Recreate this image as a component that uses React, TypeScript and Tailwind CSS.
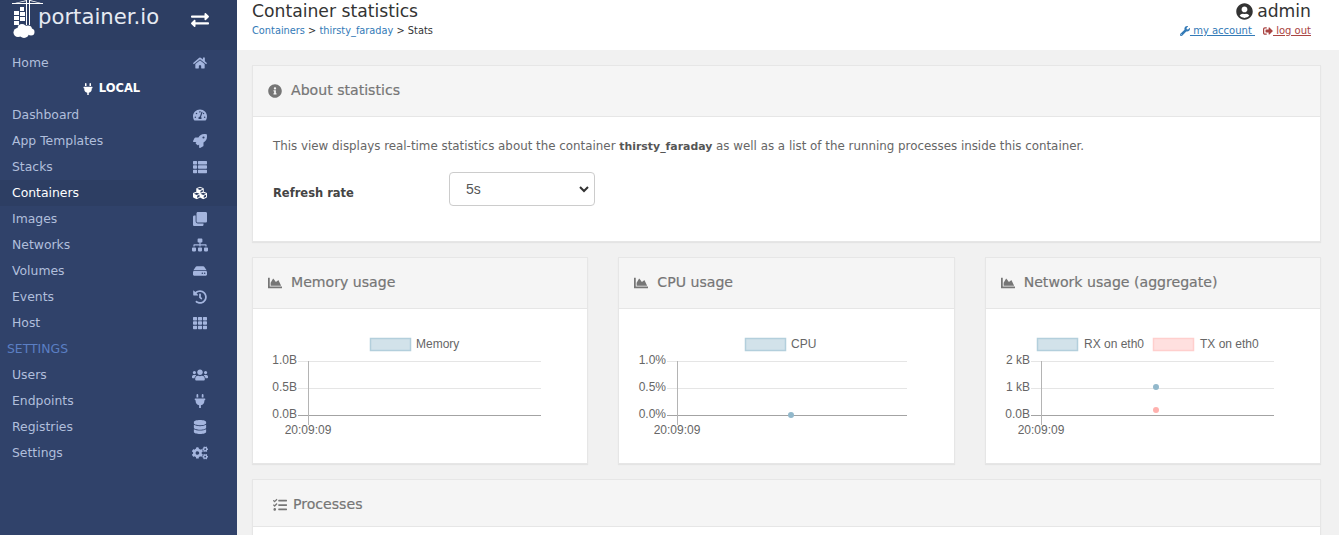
import type { ReactNode } from "react";
import {
  FaChartArea,
  FaClone,
  FaCogs,
  FaCubes,
  FaDatabase,
  FaExchangeAlt,
  FaHdd,
  FaHistory,
  FaHome,
  FaInfoCircle,
  FaPlug,
  FaRocket,
  FaSignOutAlt,
  FaSitemap,
  FaTachometerAlt,
  FaTasks,
  FaTh,
  FaThList,
  FaUserCircle,
  FaUsers,
  FaWrench,
} from "react-icons/fa";
import type { IconType } from "react-icons";

const font = "font-['DejaVu_Sans',sans-serif]";

function NavItem({
  label,
  icon: Icon,
  active,
  wide,
}: {
  label: string;
  icon: IconType;
  active?: boolean;
  wide?: boolean;
}) {
  return (
    <div
      className={`flex h-[26px] items-center justify-between pl-3 pr-[29px] text-[12.4px] ${
        active ? "bg-[#2d3e63] text-white" : "text-[#b1bfdc]"
      }`}
    >
      <span>{label}</span>
      <span className="flex w-4 justify-center">
        <Icon className={`${wide ? "text-[16px]" : "text-[14px]"} ${active ? "text-white" : "text-[#a4b5de]"}`} />
      </span>
    </div>
  );
}

function Sidebar() {
  return (
    <aside className="flex w-[237px] shrink-0 flex-col bg-[#30426a]">
      <div className="flex h-[50px] items-start justify-between bg-[#2d3e63] pl-3 pr-7">
        <div className="flex items-start">
          <svg width="32" height="39" viewBox="0 0 32 39" fill="#fff">
            <rect x="0" y="3" width="31" height="1" />
            <path d="M14 0h1v25h-1zM17 0h1v25h-1z" />
            <path d="M15 0L3 3h2L15 1zM18 0l11 3h-2L18 1z" />
            <path d="M8 7h4v4H8zM2 11h5v4H2zM8 12h5v4H8zM2 16h5v4H2zM8 17h5v4H8zM2 21h5v4H2z" />
            <circle cx="6" cy="32.5" r="4.5" />
            <circle cx="10" cy="28.5" r="4.5" />
            <circle cx="16" cy="29.5" r="4" />
            <circle cx="19" cy="32" r="3.5" />
            <circle cx="12" cy="33" r="5" />
          </svg>
          <span className="-ml-[6px] mt-[5px] text-[21.2px] leading-[24px] text-[#e6eaf2]">portainer.io</span>
        </div>
        <FaExchangeAlt className="mt-[11px] text-[18px] text-white" />
      </div>
      <NavItem label="Home" icon={FaHome} />
      <div className="flex h-[26px] items-center justify-center gap-[5px] pr-[15px] text-[11.5px] font-bold text-white">
        <FaPlug className="text-[12px]" />
        <span>LOCAL</span>
      </div>
      <NavItem label="Dashboard" icon={FaTachometerAlt} />
      <NavItem label="App Templates" icon={FaRocket} />
      <NavItem label="Stacks" icon={FaThList} />
      <NavItem label="Containers" icon={FaCubes} active />
      <NavItem label="Images" icon={FaClone} />
      <NavItem label="Networks" icon={FaSitemap} wide />
      <NavItem label="Volumes" icon={FaHdd} />
      <NavItem label="Events" icon={FaHistory} />
      <NavItem label="Host" icon={FaTh} />
      <div className="flex h-[26px] items-center pl-[7px] text-[12.4px] text-[#5b7fc4]">SETTINGS</div>
      <NavItem label="Users" icon={FaUsers} wide />
      <NavItem label="Endpoints" icon={FaPlug} />
      <NavItem label="Registries" icon={FaDatabase} />
      <NavItem label="Settings" icon={FaCogs} wide />
    </aside>
  );
}

function Header() {
  return (
    <header className="flex h-[50px] shrink-0 justify-between bg-white pl-[15px] pr-7">
      <div>
        <div className="pt-[1px] text-[17.2px] leading-[20px] text-[#333]">Container statistics</div>
        <div className="mt-[3px] text-[9.8px] leading-[14px] text-[#333]">
          <span className="text-[#337ab7]">Containers</span> &gt;{" "}
          <span className="text-[#337ab7]">thirsty_faraday</span> &gt; Stats
        </div>
      </div>
      <div className="flex flex-col items-end">
        <div className="flex items-center gap-[4px] pt-[1px] text-[17.2px] leading-[20px] text-[#333]">
          <FaUserCircle className="text-[17px]" />
          <span>admin</span>
        </div>
        <div className="mt-[3px] flex items-center text-[10px] leading-[14px]">
          <FaWrench className="text-[10px] text-[#337ab7]" />
          <span className="text-[#337ab7] underline">{"\u00a0my account\u00a0"}</span>
          <FaSignOutAlt className="ml-2 text-[10px] text-[#a94442]" />
          <span className="text-[#a94442] underline">{"\u00a0log out"}</span>
        </div>
      </div>
    </header>
  );
}

function Panel({
  title,
  icon,
  children,
  className,
  headerClass = "h-[51px]",
}: {
  title: string;
  icon: ReactNode;
  children?: ReactNode;
  className?: string;
  headerClass?: string;
}) {
  return (
    <section className={`border border-[#e6e6e6] bg-white shadow-[0_1px_1px_rgba(0,0,0,0.05)] ${className ?? ""}`}>
      <div
        className={`flex items-center border-b border-[#e6e6e6] bg-[#f5f5f5] pl-[15px] text-[14.1px] text-[#767676] [-webkit-text-stroke:0.2px_#767676] ${headerClass}`}
      >
        {icon}
        <span>{title}</span>
      </div>
      {children}
    </section>
  );
}

type Legend = { x: number; w: number; label: string; textX: number; fill: string; stroke: string };
type Dot = { x: number; y: number; fill: string };

function Chart({
  axisX,
  endX,
  labels,
  legends,
  dots = [],
}: {
  axisX: number;
  endX: number;
  labels: string[];
  legends: Legend[];
  dots?: Dot[];
}) {
  // y values are relative to the top of the panel body
  const ys = [52, 79, 106];
  return (
    <svg width="100%" height="154" className="block font-['Liberation_Sans',sans-serif] text-[12px]">
      {legends.map((l) => (
        <g key={l.label}>
          <rect x={l.x + 0.5} y={29.5} width={l.w} height={12} fill={l.fill} stroke={l.stroke} strokeWidth="1.5" />
          <text x={l.textX} y={39} fill="#666">
            {l.label}
          </text>
        </g>
      ))}
      {ys.map((y, i) => (
        <g key={y}>
          <line x1={axisX - 10} x2={endX} y1={y + 0.5} y2={y + 0.5} stroke={i === 2 ? "#a3a3a3" : "#e5e5e5"} />
          <text x={axisX - 11} y={y + 3} textAnchor="end" fill="#666">
            {labels[i]}
          </text>
        </g>
      ))}
      <line x1={axisX + 0.5} x2={axisX + 0.5} y1={52} y2={116} stroke="#b4b4b4" />
      <text x={axisX} y={125} textAnchor="middle" fill="#666">
        20:09:09
      </text>
      {dots.map((d) => (
        <circle key={d.y} cx={d.x} cy={d.y} r="3" fill={d.fill} />
      ))}
    </svg>
  );
}

const blue = { fill: "#d2e2ea", stroke: "#b3cfdc" };
const red = { fill: "#ffe0df", stroke: "#ffcfcd" };

const chartIcon = <FaChartArea className="mr-[9px] text-[14px]" />;

export default function App() {
  return (
    <div className={`flex h-[535px] w-[1339px] overflow-hidden bg-[#f1f1f1] ${font}`}>
      <Sidebar />
      <main className="flex min-w-0 flex-1 flex-col">
        <Header />
        <div className="flex flex-col gap-[15px] pl-[15px] pr-[18px] pt-[15px]">
          <Panel title="About statistics" icon={<FaInfoCircle className="mr-[9px] text-[14px]" />}>
            <div className="h-[124px] px-5 pt-[21px] text-[11.86px] text-[#666]">
              <p className="leading-[16px]">
                This view displays real-time statistics about the container{" "}
                <b className="text-[10.9px] text-[#555]">thirsty_faraday</b> as well as a list of the running processes
                inside this container.
              </p>
              <div className="mt-[17px] flex items-start">
                <span className="mt-[13px] w-[176px] text-[11.5px] font-bold text-[#444]">Refresh rate</span>
                <div className="flex h-[34px] w-[146px] items-center justify-between rounded border border-[#ccc] pl-4 pr-[4px] font-['Liberation_Sans',sans-serif] text-[14px] text-[#555]">
                  <span>5s</span>
                  <svg width="12" height="12" viewBox="0 0 12 12" fill="none" stroke="#333" strokeWidth="2">
                    <path d="M2 4l4 4 4-4" />
                  </svg>
                </div>
              </div>
            </div>
          </Panel>
          <div className="grid grid-cols-3 gap-x-[30px]">
            <Panel title="Memory usage" icon={chartIcon}>
              <Chart
                axisX={55}
                endX={288}
                labels={["1.0B", "0.5B", "0.0B"]}
                legends={[{ x: 117, w: 40, label: "Memory", textX: 163, ...blue }]}
              />
            </Panel>
            <Panel title="CPU usage" icon={chartIcon}>
              <Chart
                axisX={58}
                endX={288}
                labels={["1.0%", "0.5%", "0.0%"]}
                legends={[{ x: 126, w: 40, label: "CPU", textX: 172, ...blue }]}
                dots={[{ x: 172, y: 106, fill: "#92b8cb" }]}
              />
            </Panel>
            <Panel title="Network usage (aggregate)" icon={chartIcon}>
              <Chart
                axisX={55}
                endX={288}
                labels={["2 kB", "1 kB", "0.0B"]}
                legends={[
                  { x: 51, w: 40, label: "RX on eth0", textX: 98, ...blue },
                  { x: 167, w: 40, label: "TX on eth0", textX: 214, ...red },
                ]}
                dots={[
                  { x: 170, y: 78, fill: "#92b8cb" },
                  { x: 170, y: 101, fill: "#ffb1ae" },
                ]}
              />
            </Panel>
          </div>
          <Panel
            title="Processes"
            icon={<FaTasks className="ml-[5px] mr-[6px] text-[14px]" />}
            className="h-[100px]"
            headerClass="h-[47px] pt-[3px]"
          />
        </div>
      </main>
    </div>
  );
}
